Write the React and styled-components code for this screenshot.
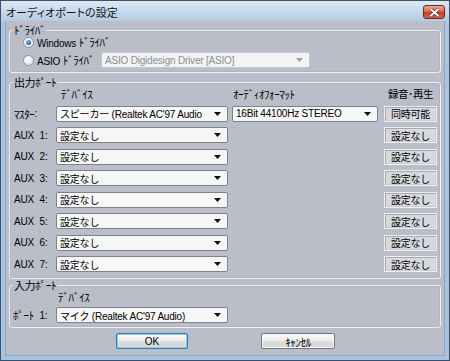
import React from 'react'
import styled, { createGlobalStyle } from 'styled-components'

const font = `"Liberation Sans", "Noto Sans CJK JP", sans-serif`

const GlobalStyle = createGlobalStyle`
  html, body {
    margin: 0;
    padding: 0;
    background: #b9bec9;
  }
  * {
    box-sizing: border-box;
  }
`

const auxRows = [1, 2, 3, 4, 5, 6, 7]

const App = () => {
  return (
    <>
      <GlobalStyle />
      <Window>
        <TitleBar>
          <Title>オーディオポートの設定</Title>
          <CloseButton>
            <svg width="11" height="9" viewBox="0 0 11 9">
              <path d="M1.5 1 L9.5 8 M9.5 1 L1.5 8" stroke="#6b2a20" strokeWidth="3.2" />
              <path d="M1.5 1 L9.5 8 M9.5 1 L1.5 8" stroke="#fff" strokeWidth="1.8" />
            </svg>
          </CloseButton>
        </TitleBar>
        <Client>
          <Group>
            <Legend>ﾄﾞﾗｲﾊﾞ</Legend>
            <DriverBody>
              <RadioRow>
                <RadioOption>
                  <Radio $checked />
                  <span>Windows <Kana>ﾄﾞﾗｲﾊﾞ</Kana></span>
                </RadioOption>
              </RadioRow>
              <RadioRow $tall>
                <RadioOption $width={78}>
                  <Radio />
                  <span>ASIO <Kana>ﾄﾞﾗｲﾊﾞ</Kana></span>
                </RadioOption>
                <Combo $width={209} $disabled>
                  <span>ASIO Digidesign Driver [ASIO]</span>
                  <Arrow $disabled />
                </Combo>
              </RadioRow>
            </DriverBody>
          </Group>

          <Group $top={3}>
            <Legend>出力ﾎﾟｰﾄ</Legend>
            <PortGrid $bottom={6}>
              <span />
              <HeadCell $indent={5}>ﾃﾞﾊﾞｲｽ</HeadCell>
              <HeadCell $indent={1}>ｵｰﾃﾞｨｵﾌｫｰﾏｯﾄ</HeadCell>
              <HeadCell $center>録音･再生</HeadCell>

              <RowLabel><Kana>ﾏｽﾀｰ</Kana>:</RowLabel>
              <Combo $width={172}>
                <span>スピーカー (Realtek AC'97 Audio</span>
                <Arrow />
              </Combo>
              <Combo $width={146}>
                <span>16Bit 44100Hz STEREO</span>
                <Arrow />
              </Combo>
              <ModeButton>同時可能</ModeButton>

              {auxRows.map(n => (
                <React.Fragment key={n}>
                  <RowLabel>AUX {n}:</RowLabel>
                  <Combo $width={172}>
                    <span>設定なし</span>
                    <Arrow />
                  </Combo>
                  <span />
                  <ModeButton>設定なし</ModeButton>
                </React.Fragment>
              ))}
            </PortGrid>
          </Group>

          <Group>
            <Legend>入力ﾎﾟｰﾄ</Legend>
            <PortGrid $bottom={4} $gap={4}>
              <span />
              <HeadCell $indent={2}>ﾃﾞﾊﾞｲｽ</HeadCell>
              <span />
              <span />

              <RowLabel $left={-1}><Kana>ﾎﾟｰﾄ</Kana> 1:</RowLabel>
              <Combo $width={172}>
                <span>マイク (Realtek AC'97 Audio)</span>
                <Arrow />
              </Combo>
              <span />
              <span />
            </PortGrid>
          </Group>

          <ButtonBar>
            <PushButton $primary $width={72}>OK</PushButton>
            <PushButton $width={74}><Kana>ｷｬﾝｾﾙ</Kana></PushButton>
          </ButtonBar>
        </Client>
      </Window>
    </>
  )
}

const Arrow = ({ $disabled }) => (
  <ArrowIcon width="7" height="4" viewBox="0 0 7 4">
    <path d="M0 0 H7 L3.5 4 Z" fill={$disabled ? '#9a9ea6' : '#111'} />
  </ArrowIcon>
)

const Window = styled.div`
  width: 450px;
  height: 361px;
  border: 1px solid #3e5068;
  background: linear-gradient(#c9dcef 0px, #a9c7e4 22px, #a6c4e2 100%);
  display: flex;
  flex-direction: column;
  font-family: ${font};
  font-size: 10px;
  color: #000;
  overflow: hidden;
`

const TitleBar = styled.div`
  height: 20px;
  flex: none;
  display: flex;
  align-items: center;
  justify-content: space-between;
  padding: 0 4px 0 5px;
  background: linear-gradient(#dfe9f4, #c3d7ec 60%, #b3cce6);
`

const Title = styled.div`
  font-family: "Noto Sans CJK JP", sans-serif;
  font-size: 11px;
  font-feature-settings: 'palt';
  color: #141414;
  margin-top: 1px;
`

const CloseButton = styled.div`
  width: 22px;
  height: 14px;
  margin-top: 2px;
  border: 1px solid #6e2a22;
  border-radius: 3px;
  background: linear-gradient(#eba896, #d86b55 45%, #c4402a 55%, #d4604a);
  display: flex;
  align-items: center;
  justify-content: center;
`

const Client = styled.div`
  flex: 1;
  margin: 0 4px 4px;
  background: #b9bec9;
  padding: 3px 3px 0;
  display: flex;
  flex-direction: column;
  border: 1px solid #8fa5bd;
  border-top: none;
`

const Group = styled.fieldset`
  margin: ${p => p.$top || 0}px 0 0;
  padding: 0;
  min-width: 0;
  border: 1px solid #eef0f4;
  border-radius: 3px;
  box-shadow: inset 0 0 0 1px rgba(150, 156, 170, 0.25);
`

const Kana = styled.span`
  font-family: "Noto Sans CJK JP", sans-serif;
  font-size: 11px;
  letter-spacing: -0.4px;
`

const Legend = styled.legend`
  margin-left: 3px;
  padding: 0 1px;
  height: 12px;
  line-height: 12px;
  font-family: "Noto Sans CJK JP", sans-serif;
  font-size: 11px;
  letter-spacing: -0.4px;
`

const DriverBody = styled.div`
  display: flex;
  flex-direction: column;
  gap: 4px;
  padding: 0 0 4px 13px;
`

const RadioRow = styled.div`
  height: ${p => (p.$tall ? 16 : 12)}px;
  display: flex;
  align-items: center;
`

const RadioOption = styled.label`
  display: flex;
  align-items: center;
  gap: 3px;
  width: ${p => (p.$width ? `${p.$width}px` : 'auto')};
  flex: none;
  letter-spacing: -0.2px;
`

const Radio = styled.span`
  width: 11px;
  height: 11px;
  border-radius: 50%;
  border: 1px solid #8e949e;
  background: radial-gradient(circle at 40% 35%, #fdfdfd, #dcdfe4);
  position: relative;
  flex: none;
  &::after {
    content: '';
    display: ${p => (p.$checked ? 'block' : 'none')};
    position: absolute;
    inset: 2px;
    border-radius: 50%;
    background: radial-gradient(circle at 40% 35%, #7bc4f0, #1d5fa8 70%, #183f78);
  }
`

const Combo = styled.div`
  width: ${p => p.$width}px;
  height: 16px;
  display: flex;
  align-items: center;
  justify-content: space-between;
  padding: 0 6px 0 3px;
  border: 1px solid ${p => (p.$disabled ? '#c3c7ce' : '#7d838e')};
  border-radius: 2px;
  background: ${p => (p.$disabled ? '#f3f3f3' : '#f6f6f6')};
  color: ${p => (p.$disabled ? '#8d8f94' : '#000')};
  letter-spacing: -0.2px;
  white-space: nowrap;
  overflow: hidden;
  align-self: center;
`

const ArrowIcon = styled.svg`
  flex: none;
  margin-left: 4px;
`

const PortGrid = styled.div`
  display: grid;
  grid-template-columns: 46px 176px 152px 53px;
  grid-auto-rows: 16px;
  grid-template-rows: 12px;
  row-gap: ${p => (p.$gap != null ? p.$gap : 5.5)}px;
  padding: 0 4px ${p => p.$bottom}px 0;
`

const HeadCell = styled.div`
  height: 12px;
  line-height: 12px;
  padding-left: ${p => p.$indent || 0}px;
  text-align: ${p => (p.$center ? 'center' : 'left')};
  font-family: "Noto Sans CJK JP", sans-serif;
  font-size: ${p => (p.$center ? 10.5 : 11)}px;
  letter-spacing: -0.4px;
`

const RowLabel = styled.div`
  display: flex;
  align-items: center;
  gap: 0;
  padding-left: ${p => 4 + (p.$left || 0)}px;
  word-spacing: 3px;
  letter-spacing: -0.2px;
  white-space: pre;
`

const ModeButton = styled.div`
  height: 16px;
  display: flex;
  align-items: center;
  justify-content: center;
  background: #d7d9df;
  border: 1px solid #eceef2;
  box-shadow: inset 1px 1px 0 #a5a9b2, inset -1px -1px 0 #c9ccd3;
  letter-spacing: -0.3px;
`

const ButtonBar = styled.div`
  display: flex;
  justify-content: center;
  gap: 73px;
  margin-top: 5px;
  padding-left: 1px;
`

const PushButton = styled.button`
  width: ${p => p.$width}px;
  height: 16px;
  padding: 0;
  font-family: ${font};
  font-size: 10px;
  color: #000;
  border-radius: 2px;
  border: 1px solid ${p => (p.$primary ? '#2f79b8' : '#6f737a')};
  background: linear-gradient(#fafafa, #ececec 50%, #dcdcdc 51%, #d6d6d6);
  box-shadow: ${p => (p.$primary ? 'inset 0 0 0 1px #8fd0f2' : 'inset 0 0 0 1px #fbfbfb')};
`

export default App
